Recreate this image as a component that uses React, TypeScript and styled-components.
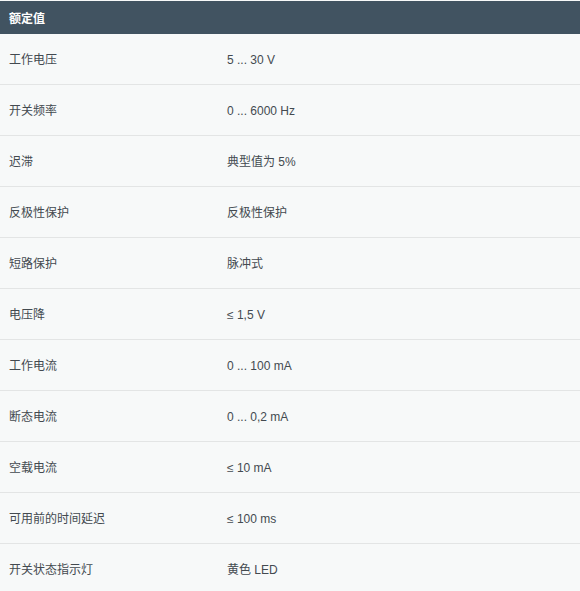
import React from "react";
import styled, { createGlobalStyle } from "styled-components";

const Global = createGlobalStyle`
  html, body { margin: 0; padding: 0; background: #f7f9f9; }
  body { font-family: "Liberation Sans", Arial, "Noto Sans CJK SC", sans-serif; }
`;

const Table = styled.div`
  width: 580px;
  padding-top: 1px;
  background: #f7f9f9;
  color: #434a50;
  font-size: 12px;
`;

const Header = styled.div`
  height: 33px;
  display: flex;
  align-items: center;
  padding-left: 9px;
  background: #415361;
  color: #ffffff;
  font-weight: bold;
  font-size: 12px;
`;

const Row = styled.div`
  display: grid;
  grid-template-columns: 218px 1fr;
  align-items: center;
  height: 50px;
  padding-left: 9px;
  border-bottom: 1px solid #e3e5e5;
`;

const Cell = styled.div`
  line-height: 14px;
  padding-top: 1px;
`;

const rows: [string, string][] = [
  ["工作电压", "5 ... 30 V"],
  ["开关频率", "0 ... 6000 Hz"],
  ["迟滞", "典型值为 5%"],
  ["反极性保护", "反极性保护"],
  ["短路保护", "脉冲式"],
  ["电压降", "≤ 1,5 V"],
  ["工作电流", "0 ... 100 mA"],
  ["断态电流", "0 ... 0,2 mA"],
  ["空载电流", "≤ 10 mA"],
  ["可用前的时间延迟", "≤ 100 ms"],
  ["开关状态指示灯", "黄色 LED"],
];

export default function App() {
  return (
    <>
      <Global />
      <Table>
        <Header>额定值</Header>
        {rows.map(([k, v]) => (
          <Row key={k}>
            <Cell>{k}</Cell>
            <Cell>{v}</Cell>
          </Row>
        ))}
      </Table>
    </>
  );
}
